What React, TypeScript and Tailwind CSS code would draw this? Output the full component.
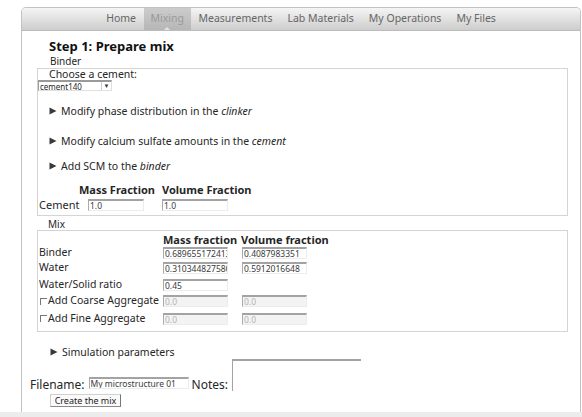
import React from 'react';

const TABS = ['Home', 'Mixing', 'Measurements', 'Lab Materials', 'My Operations', 'My Files'];

type FieldProps = { value: string; className?: string; disabled?: boolean };

// sunken text box, drawn the way the old form renders them
const Field = ({ value, className = '', disabled = false }: FieldProps) => (
  <input
    readOnly
    disabled={disabled}
    value={value}
    className={`block h-[12px] min-w-0 p-0 pl-[1px] border-t-2 border-l border-r border-b border-t-[#a3a3a3] border-l-[#ababab] border-r-[#ececec] border-b-[#ececec] text-[8.5px] leading-[9px] outline-none font-['Noto_Sans',sans-serif] ${
      disabled ? 'bg-[#f3f3f3] text-[#b4b4b4]' : 'bg-white text-[#3a3a3a]'
    } ${className}`}
  />
);

const Arrow = () => (
  <svg width="8" height="8" viewBox="0 0 8 8" className="mr-[4px] shrink-0">
    <polygon points="0.5,0.5 7.5,4 0.5,7.5" fill="#3a3a3a" />
  </svg>
);

const Toggle = ({ children, className = '' }: { children: React.ReactNode; className?: string }) => (
  <div className={`flex items-center h-[12px] leading-[12px] ${className}`}>
    <Arrow />
    <span>{children}</span>
  </div>
);

const Check = () => (
  <span className="inline-block w-[7px] h-[7px] border-t border-l border-[#777] mr-[1px] shrink-0" />
);

const MIX_ROWS = [
  { label: 'Binder', mass: '0.6896551724137931', volume: '0.4087983351', h: 'h-[14px]' },
  { label: 'Water', mass: '0.3103448275862069', volume: '0.5912016648', h: 'h-[16px]' },
];

export default function App() {
  return (
    <div className="w-[582px] h-[417px] overflow-hidden bg-white font-['Noto_Sans',sans-serif] text-[10.5px] text-[#262626] flex flex-col">
      <div className="ml-[21px] mt-[7px] w-[560px] h-[405px] shrink-0 border border-b-0 border-[#c2c2c2] rounded-t-[5px] overflow-hidden flex flex-col">
        {/* tab strip */}
        <nav className="h-[23px] shrink-0 flex justify-center bg-gradient-to-b from-[#f5f5f5] to-[#cdcdcd] border-b border-[#bdbdbd]">
          {TABS.map(tab =>
            tab === 'Mixing' ? (
              <div
                key={tab}
                className="relative px-[7px] flex items-center text-[10.5px] text-[#9a9a9a] bg-gradient-to-b from-[#cccccc] to-[#b6b6b6]"
              >
                {tab}
                <span className="absolute bottom-0 left-1/2 -translate-x-1/2 w-0 h-0 border-l-[3px] border-r-[3px] border-b-[3px] border-l-transparent border-r-transparent border-b-[#e2e2e2]" />
              </div>
            ) : (
              <div key={tab} className="px-[7.5px] flex items-center text-[10.5px] text-[#666]">
                {tab}
              </div>
            )
          )}
        </nav>

        <div className="flex-1 flex flex-col">
          <h1 className="mt-[8px] pl-[27px] text-[13px] leading-[15px] font-bold text-[#111]">Step 1: Prepare mix</h1>
          <div className="mt-[1px] pl-[28px] text-[10px] leading-[12px]">Binder</div>

          {/* binder block */}
          <div className="mt-[1px] ml-[15px] w-[531px] border border-[#d4d4d4] pb-[4px] flex flex-col">
            <div className="pl-[11px] leading-[11px]">Choose a cement:</div>
            <div className="w-[74px] h-[11px] flex items-center border-t-2 border-l border-[#9a9a9a] border-r border-b border-r-[#e0e0e0] border-b-[#e0e0e0] bg-white">
              <span className="pl-[1px] text-[8px] leading-[9px] flex-1">cement140</span>
              <span className="w-[10px] h-full flex items-center justify-center border-l border-[#d0d0d0] text-[6px] text-[#333]">▼</span>
            </div>
            <Toggle className="mt-[14px] pl-[11px]">
              Modify phase distribution in the <i>clinker</i>
            </Toggle>
            <Toggle className="mt-[18px] pl-[11px]">
              Modify calcium sulfate amounts in the <i>cement</i>
            </Toggle>
            <Toggle className="mt-[13px] pl-[11px]">
              Add SCM to the <i>binder</i>
            </Toggle>
            <div className="mt-[12px] flex text-[11px] leading-[12px] font-bold">
              <span className="ml-[41px] w-[83px]">Mass Fraction</span>
              <span>Volume Fraction</span>
            </div>
            <div className="mt-[3px] h-[12px] flex items-center">
              <span className="pl-[1px] w-[50px] text-[11px]">Cement</span>
              <Field value="1.0" className="w-[56px]" />
              <Field value="1.0" className="ml-[18px] w-[66px]" />
            </div>
          </div>

          <div className="mt-[2px] pl-[26px] text-[10px] leading-[12px]">Mix</div>

          {/* mix block */}
          <div className="ml-[15px] w-[531px] border border-[#d4d4d4] pt-[3px] pb-[3px] flex flex-col">
            <div className="flex text-[11px] leading-[12px] font-bold">
              <span className="ml-[125px] w-[78px]">Mass fraction</span>
              <span>Volume fraction</span>
            </div>
            {MIX_ROWS.map(row => (
              <div key={row.label} className={`${row.h} flex items-center`}>
                <span className="pl-[1px] w-[125px]">{row.label}</span>
                <Field value={row.mass} className="w-[65px]" />
                <Field value={row.volume} className="ml-[14px] w-[65px]" />
              </div>
            ))}
            <div className="h-[17px] flex items-center">
              <span className="pl-[1px] w-[125px]">Water/Solid ratio</span>
              <Field value="0.45" className="w-[65px]" />
            </div>
            <div className="h-[16px] flex items-center">
              <span className="pl-[2px] w-[125px] flex items-center whitespace-nowrap">
                <Check />
                Add Coarse Aggregate
              </span>
              <Field value="0.0" disabled className="w-[65px]" />
              <Field value="0.0" disabled className="ml-[14px] w-[65px]" />
            </div>
            <div className="h-[19px] flex items-center">
              <span className="pl-[2px] w-[125px] flex items-center whitespace-nowrap">
                <Check />
                Add Fine Aggregate
              </span>
              <Field value="0.0" disabled className="w-[65px]" />
              <Field value="0.0" disabled className="ml-[14px] w-[65px]" />
            </div>
          </div>

          <Toggle className="mt-[14px] pl-[28px]">Simulation parameters</Toggle>

          {/* save row */}
          <div className="mt-[1px] pl-[8px] flex items-end text-[12px]">
            <span className="leading-[12px]">Filename:</span>
            <Field value="My microstructure 01" className="ml-[4px] mb-[2px] w-[100px] h-[11px]" />
            <span className="ml-[3px] leading-[12px]">Notes:</span>
            <div className="ml-[4px] w-[129px] h-[32px] border-t-2 border-l border-[#a3a3a3] bg-white" />
          </div>
          <button className="mt-[3px] ml-[28px] w-[71px] h-[13px] flex items-center justify-center text-[9px] leading-[10px] text-[#222] bg-[#fafafa] border-t border-l border-[#d0d0d0] border-r border-b border-r-[#777] border-b-[#8a8a8a]">
            Create the mix
          </button>
        </div>
      </div>
      <div className="flex-1 bg-[#ececec]" />
    </div>
  );
}
